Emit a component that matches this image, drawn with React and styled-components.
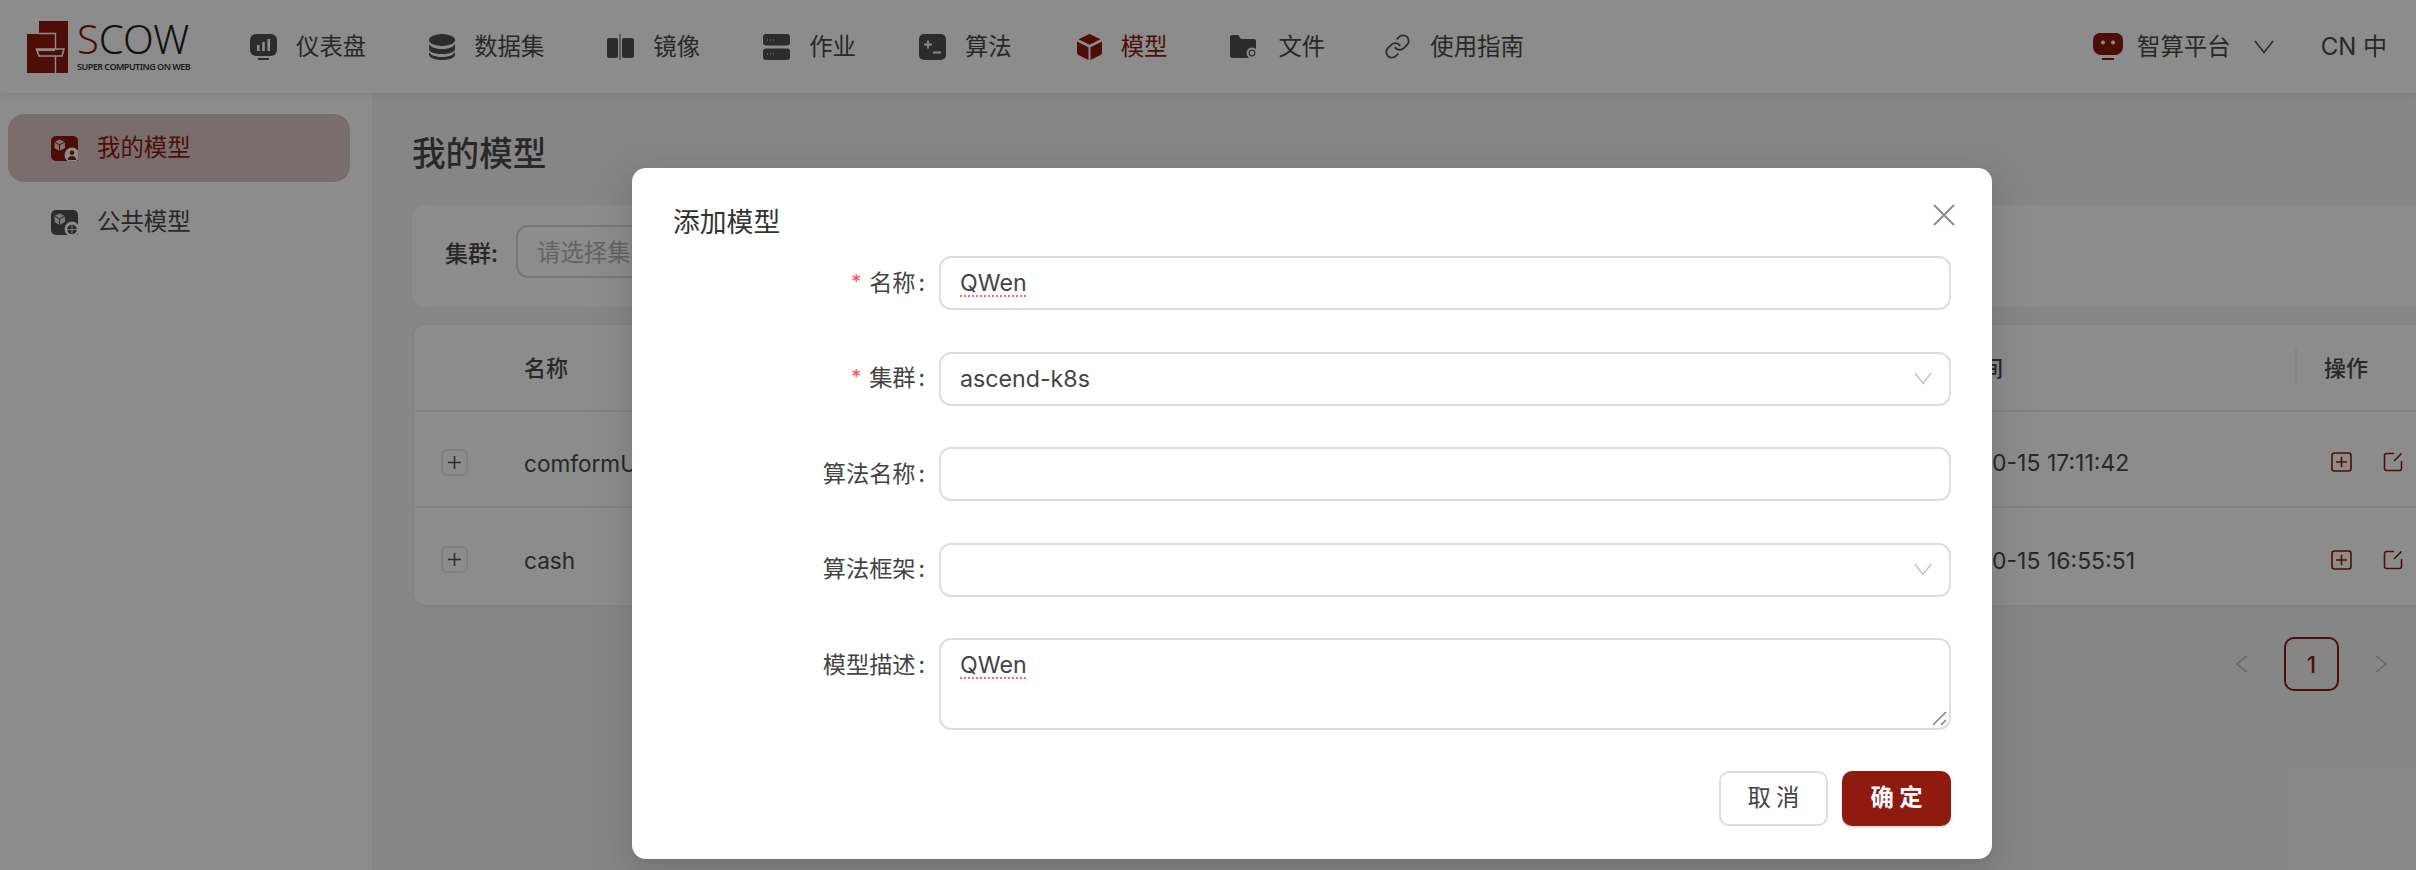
import React from "react";
import styled, { createGlobalStyle } from "styled-components";
import { Link as LinkIcon } from "lucide-react";

const Global = createGlobalStyle`
  html, body { margin: 0; padding: 0; height: 870px; overflow: hidden; background: #fff; }
  * { box-sizing: border-box; }
  body { font-family: Inter, "Noto Sans CJK SC", sans-serif; color: #4c4c4c; font-size: 22px; }
`;

const RED = "#8f1a10";
const TEXT = "#4a4a4a";
const Page = styled.div`width: 2416px; height: 870px; display: flex; flex-direction: column; overflow: hidden; position: relative;`;
const Header = styled.header`
  height: 93px; flex: none; background: #fff; display: flex; align-items: center; padding: 0 29px 0 27px;
  position: relative; z-index: 1; box-shadow: 0 2px 8px rgba(0,0,0,.08);
`;
const Logo = styled.div`display: flex; gap: 9px; align-items: flex-start; width: 223px; flex: none; height: 52px;`;
const LogoText = styled.div`display: flex; flex-direction: column; width: 114px;`;
const Wordmark = styled.div`
  font-family: "Noto Sans", sans-serif; font-weight: 300; font-size: 40px; line-height: 40px; height: 40px; color: #222; margin-top: -2px;
  span { color: ${RED}; }
`;
const Tagline = styled.div`font-family: "Noto Sans", sans-serif; font-weight: 600; font-size: 9px; letter-spacing: -.5px; line-height: 11px; color: #333; white-space: nowrap; margin-top: 2px;`;
const Nav = styled.nav`display: flex; gap: 63px; align-items: center; flex: 1;`;
const NavItem = styled.div`
  display: flex; align-items: center; gap: ${p => p.$gap || 19}px; margin-left: ${p => p.$shift || 0}px; font-size: 23.4px; line-height: 32px; font-family: "Noto Sans CJK SC", sans-serif;
  color: ${p => (p.$active ? RED : TEXT)};
  svg { flex: none; display: block; }
  span { padding-bottom: 4px; }
`;
const Right = styled.div`display: flex; align-items: center; font-family: "Noto Sans CJK SC", sans-serif; font-size: 23.4px; color: ${TEXT};`;
const Platform = styled.div`
  display: flex; align-items: center; gap: 14px;
  span { padding-bottom: 4px; }
`;
const HeadChevron = styled.div`margin-left: 9px; svg { display: block; }`;
const Lang = styled.div`margin-left: 47px; padding-bottom: 4px; font-family: Inter, "Noto Sans CJK SC", sans-serif; font-size: 24px; white-space: nowrap;`;
const Body = styled.div`flex: 1; display: flex; min-height: 0;`;
const Sidebar = styled.aside`width: 372px; flex: none; background: #fff; padding: 21px 22px 0 8px; display: flex; flex-direction: column; gap: 6px;`;
const SideItem = styled.div`
  height: 68px; border-radius: 16px; display: flex; align-items: center; gap: 19px; padding-left: 43px;
  font-family: "Noto Sans CJK SC", sans-serif; font-size: 23.4px;
  background: ${p => (p.$active ? "#dcc9c6" : "transparent")};
  color: ${p => (p.$active ? RED : TEXT)};
  span { padding-bottom: 4px; }
`;
const Main = styled.main`flex: 1; background: #f5f5f5; padding: 36px 0 0 40px; min-width: 0;`;
const Title = styled.h1`margin: 0 0 30px; font: 500 33.6px/46px "Noto Sans CJK SC", sans-serif; color: ${TEXT};`;
const FilterCard = styled.div`
  height: 102px; background: #fff; border-radius: 14px 0 0 14px; padding: 20px 33px 29px; display: flex; align-items: center; gap: 13px;
`;
const FilterLabel = styled.label`font: 500 23px/1 "Noto Sans CJK SC", sans-serif; color: ${TEXT}; width: 58px; white-space: nowrap; padding-top: 2px;`;
const FilterInput = styled.div`
  width: 400px; height: 53px; border: 2px solid #d9d9d9; border-radius: 12px; padding-left: 19px; display: flex; align-items: center;
  font: 400 23.4px/1 "Noto Sans CJK SC", sans-serif; color: #b5b5b5;
`;
const TableCard = styled.div`margin-top: 16px; background: #fff; border: 2px solid #f0f0f0; border-right: 0; border-radius: 14px 0 0 14px;`;
const Row = styled.div`
  display: grid; grid-template-columns: 110px 1391px 380px 120px; align-items: center;
  height: ${p => p.$h}px;
  padding: ${p => (p.$head ? "0 0 3px" : "6px 0 0")};
  border-bottom: ${p => (p.$last ? "0" : "2px solid #f0f0f0")};
`;
const Cell = styled.div`font-size: 22.6px; white-space: nowrap; color: ${TEXT}; padding-top: ${p => (p.$head ? 0 : 2)}px;`;
const TimeCell = styled(Cell)`font-size: 23px;`;
const HeadCell = styled(Cell)`font: 500 22px/1 "Noto Sans CJK SC", sans-serif;`;
const OpHead = styled(HeadCell)`
  position: relative; padding-left: 29px;
  &::before { content: ""; position: absolute; left: 0; top: -7px; bottom: -7px; width: 2px; background: #f0f0f0; }
`;
const Expand = styled.div`
  width: 27px; height: 27px; margin-left: 27px; border: 2px solid #ececec; border-radius: 6px; display: flex; align-items: center; justify-content: center;
`;
const Actions = styled.div`display: flex; gap: 31px; padding-left: 36px; svg { display: block; }`;
const Pager = styled.div`display: flex; justify-content: flex-end; align-items: center; padding: 30px 28px 0 0; gap: 34px;`;
const PageNum = styled.div`
  width: 55px; height: 54px; border: 2px solid ${RED}; border-radius: 10px; color: ${RED}; display: flex; align-items: center; justify-content: center;
  font-size: 22.6px; font-weight: 500; margin: 0 2px;
`;
const Overlay = styled.div`position: absolute; inset: 0; background: rgba(0,0,0,.45); z-index: 5;`;
const Modal = styled.div`
  position: absolute; z-index: 6; left: 632px; top: 168px; width: 1360px; height: 691px; background: #fff; border-radius: 14px;
  padding: 35px 41px 34px;
  box-shadow: 0 10px 26px rgba(0,0,0,.08), 0 5px 10px -6px rgba(0,0,0,.12), 0 14px 45px 13px rgba(0,0,0,.05);
`;
const ModalTitle = styled.div`font: 400 26.8px/36px "Noto Sans CJK SC", sans-serif; color: #333; margin-bottom: 17px;`;
const Close = styled.div`position: absolute; right: 37px; top: 36px; svg { display: block; }`;
const Form = styled.form`display: flex; flex-direction: column; gap: 41.5px;`;
const FormRow = styled.div`display: grid; grid-template-columns: 266px 1012px; align-items: start;`;
const Label = styled.label`
  display: flex; justify-content: flex-end; align-items: center; height: 54px; padding: 0 14px 3px 0;
  font: 400 23.2px/1 "Noto Sans CJK SC", sans-serif; color: #444;
`;
const Star = styled.span`color: #ff4d4f; margin-right: 8px; font-family: Inter, sans-serif; font-size: 20px;`;
const Colon = styled.span`margin-left: 3px;`;
const Field = styled.div`
  position: relative; height: ${p => p.$h || 54}px; border: 2px solid #dedede; border-radius: 12px; background: #fff;
  display: flex; align-items: ${p => (p.$top ? "flex-start" : "center")}; justify-content: space-between;
  padding: ${p => (p.$top ? "9px 17px 0 19px" : "0 17px 0 19px")};
  font-size: 23.2px; line-height: 32px; color: #444;
`;
const Spell = styled.span`text-decoration: underline dotted #f56c6c 2px; text-underline-offset: 4px;`;
const Grip = styled.svg`position: absolute; right: 1px; bottom: 1px;`;
const Footer = styled.div`display: flex; justify-content: flex-end; gap: 14px; margin-top: 41px;`;
const Btn = styled.button`
  width: 109px; height: 55px; border-radius: 10px; padding: 0 0 4px; font: ${p => (p.$primary ? 600 : 400)} 23.4px/1 "Noto Sans CJK SC", sans-serif; white-space: pre;
  background: ${p => (p.$primary ? RED : "#fff")};
  color: ${p => (p.$primary ? "#fff" : "#444")};
  border: ${p => (p.$primary ? "0" : "2px solid #dedede")};
  box-shadow: ${p => (p.$primary ? "0 2px 0 rgba(143,26,16,.14)" : "0 2px 0 rgba(0,0,0,.02)")};
`;

const INK = "#505050";
const Dash = () => (
  <svg width="27" height="26" viewBox="0 0 27 26"><path d="M6 0h15a6 6 0 0 1 6 6v10a6 6 0 0 1-6 6H6a6 6 0 0 1-6-6V6a6 6 0 0 1 6-6z" fill={INK}/><rect x="7" y="11" width="2.6" height="6" fill="#fff"/><rect x="12.2" y="8" width="2.6" height="9" fill="#fff"/><rect x="17.4" y="5" width="2.6" height="12" fill="#fff"/><rect x="8" y="24" width="11" height="2" fill={INK}/></svg>
);
const Db = () => (
  <svg width="26" height="26" viewBox="0 0 26 26"><ellipse cx="13" cy="6" rx="13" ry="6" fill={INK}/><path d="M0 10c2 3.6 7 5 13 5s11-1.400 13-5v5c0 3.300-5.800 5-13 5S0 18.300 0 15z" fill={INK}/><path d="M0 18c2 3.600 7 5 13 5s11-1.400 13-5v2.500C26 23.800 20.200 26 13 26S0 23.800 0 20.500z" fill={INK}/></svg>
);
const Img = () => (
  <svg width="27" height="26" viewBox="0 0 27 26"><rect x="0" y="4" width="11" height="20" rx="2" fill={INK}/><rect x="15" y="4" width="12" height="20" rx="2" fill={INK}/><rect x="12.500" y="0" width="1" height="26" fill={INK}/></svg>
);
const Job = () => (
  <svg width="27" height="26" viewBox="0 0 27 26"><rect width="27" height="11.500" rx="3" fill={INK}/><rect y="14.500" width="27" height="11.500" rx="3" fill={INK}/><path d="M4 6h1M7 6h1M10 6h1M4 20h1M7 20h1M10 20h1" stroke="#fff" strokeWidth="1"/></svg>
);
const Algo = () => (
  <svg width="27" height="26" viewBox="0 0 27 26"><rect width="27" height="26" rx="5" fill={INK}/><path d="M5 10.500h8M9 6.500v8M14 18.500h8" stroke="#fff" strokeWidth="1.800"/></svg>
);
const Cube = () => (
  <svg width="25" height="26" viewBox="0 0 25 26" fill={RED}><path d="M12.500 0l11 5.200-11 5.600-11-5.600z"/><path d="M0 7.400l11.500 5.800V26L2 21.200c-1.300-.7-2-1.700-2-3z"/><path d="M25 7.400l-11.500 5.800V26l9.500-4.800c1.300-.7 2-1.700 2-3z"/></svg>
);
const Folder = () => (
  <svg width="27" height="23" viewBox="0 0 27 23"><path d="M0 2a2 2 0 0 1 2-2h6l3 4h13a2 2 0 0 1 2 2v15a2 2 0 0 1-2 2H2a2 2 0 0 1-2-2z" fill={INK}/><circle cx="22" cy="18" r="5.500" fill="#fff"/><circle cx="22" cy="18" r="2.800" fill="none" stroke={INK} strokeWidth="1.200"/></svg>
);
const Robot = () => (
  <svg width="30" height="27" viewBox="0 0 30 27" fill={RED}><path d="M7 0h16a7 7 0 0 1 7 7v7a8 8 0 0 1-8 8H8a8 8 0 0 1-8-8V7a7 7 0 0 1 7-7z"/><circle cx="10" cy="9.500" r="2" fill="#fff"/><circle cx="20" cy="9.500" r="2" fill="#fff"/><rect x="9" y="25" width="12" height="2"/></svg>
);
const Chevron = ({ w = 20, h = 14, c = INK }) => (
  <svg width={w} height={h} viewBox="0 0 20 14"><path d="M1 1l9 11.500L19 1" fill="none" stroke={c} strokeWidth="1.600"/></svg>
);
const SideIcon = ({ color, kind }) => (
  <svg width="27" height="25" viewBox="0 0 27 25">
    <path d="M5 0h17a5 5 0 0 1 5 5v20H5a5 5 0 0 1-5-5V5a5 5 0 0 1 5-5z" fill={color}/>
    <path d="M8.500 3.500l5.500 2.600v6L8.500 15 3.500 12V6.100z" fill="#fff" opacity=".8"/>
    <path d="M3.500 6.100l5 2.600 5.500-2.600M8.500 8.700V15" stroke={color} strokeWidth="1" fill="none"/>
    <circle cx="21" cy="19" r="7.500" fill="#fff"/>
    {kind === "user"
      ? <path d="M21 14.500a2.300 2.300 0 1 1 0 4.600 2.300 2.300 0 0 1 0-4.600zM16.800 24c0-2.600 1.800-4 4.200-4s4.200 1.400 4.200 4z" fill={color}/>
      : <g fill={color}><circle cx="21" cy="19.500" r="4.800"/><path d="M16 19.500h10M21 14.700v9.600" stroke="#fff" strokeWidth=".8"/></g>}
  </svg>
);
const PlusBox = () => (
  <svg width="21" height="20" viewBox="0 0 21 20" fill="none" stroke={RED} strokeWidth="1.600"><rect x="1" y="1" width="19" height="18" rx="2.500"/><path d="M10.500 4.800v10.400M5 10h11"/></svg>
);
const EditBox = () => (
  <svg width="20" height="20" viewBox="0 0 20 20" fill="none" stroke={RED} strokeWidth="1.600"><path d="M11 1.500H3.500a2 2 0 0 0-2 2v13a2 2 0 0 0 2 2h13a2 2 0 0 0 2-2V9"/><path d="M18.500 1.500L11 9"/></svg>
);
const SmallPlus = () => (
  <svg width="15" height="15" viewBox="0 0 15 15" stroke={INK} strokeWidth="1.600"><path d="M7.500 1v13M1 7.500h13"/></svg>
);
const LogoMark = () => (
  <svg width="41" height="52" viewBox="0 0 41 52" style={{ flex: "none" }}>
    <rect x="12" y="0" width="29" height="52" fill={RED}/>
    <rect x="0" y="13" width="28" height="39" fill={RED}/>
    <path d="M12 12.500h16.500V52" fill="none" stroke="#fff" strokeWidth="1.400"/>
    <path d="M9.500 28h27.500l-2 7H12z" fill={RED} stroke="#fff" strokeWidth="1.600"/>
    <path d="M9 28h19v2H9z" fill="#fff"/>
  </svg>
);

const navItems = [
  { t: "仪表盘", icon: <Dash /> },
  { t: "数据集", icon: <Db /> },
  { t: "镜像", icon: <Img /> },
  { t: "作业", icon: <Job /> },
  { t: "算法", icon: <Algo /> },
  { t: "模型", icon: <Cube />, active: true, shift: 2 },
  { t: "文件", icon: <Folder />, gap: 21 },
  { t: "使用指南", icon: <LinkIcon size={27} strokeWidth={1.6} color={INK} />, shift: -4 },
];
const rows = [["comformUI", "2024-10-15 17:11:42"], ["cash", "2024-10-15 16:55:51"]];

export default function App() {
  return (
    <Page>
      <Global />
      <Header>
        <Logo>
          <LogoMark />
          <LogoText>
            <Wordmark><span>S</span>COW</Wordmark>
            <Tagline>SUPER COMPUTING ON WEB</Tagline>
          </LogoText>
        </Logo>
        <Nav>
          {navItems.map(({ t, icon, active, gap, shift }) => (
            <NavItem key={t} $active={active} $gap={gap} $shift={shift}>{icon}<span>{t}</span></NavItem>
          ))}
        </Nav>
        <Right>
          <Platform><Robot /><span>智算平台</span><HeadChevron><Chevron /></HeadChevron></Platform>
          <Lang>CN 中</Lang>
        </Right>
      </Header>
      <Body>
        <Sidebar>
          <SideItem $active><SideIcon color={RED} kind="user" /><span>我的模型</span></SideItem>
          <SideItem><SideIcon color={INK} kind="globe" /><span>公共模型</span></SideItem>
        </Sidebar>
        <Main>
          <Title>我的模型</Title>
          <FilterCard>
            <FilterLabel>集群:</FilterLabel>
            <FilterInput>请选择集群</FilterInput>
          </FilterCard>
          <TableCard>
            <Row $h={87} $head>
              <Cell $head />
              <HeadCell $head>名称</HeadCell>
              <HeadCell $head>创建时间</HeadCell>
              <OpHead $head>操作</OpHead>
            </Row>
            {rows.map(([n, t], i) => (
              <Row key={n} $h={i === 1 ? 97 : 96} $last={i === 1}>
                <Expand><SmallPlus /></Expand>
                <Cell>{n}</Cell>
                <TimeCell>{t}</TimeCell>
                <Actions><PlusBox /><EditBox /></Actions>
              </Row>
            ))}
          </TableCard>
          <Pager>
            <svg width="13" height="18" viewBox="0 0 13 18"><path d="M12 1L2 9l10 8" fill="none" stroke="#bdbdbd" strokeWidth="1.600"/></svg>
            <PageNum>1</PageNum>
            <svg width="13" height="18" viewBox="0 0 13 18"><path d="M1 1l10 8-10 8" fill="none" stroke="#bdbdbd" strokeWidth="1.600"/></svg>
          </Pager>
        </Main>
      </Body>
      <Overlay />
      <Modal>
        <ModalTitle>添加模型</ModalTitle>
        <Close>
          <svg width="22" height="22" viewBox="0 0 22 22"><path d="M1 1l20 20M21 1L1 21" stroke="#8c8c8c" strokeWidth="2"/></svg>
        </Close>
        <Form>
          <FormRow>
            <Label><Star>*</Star>名称<Colon>:</Colon></Label>
            <Field><Spell>QWen</Spell></Field>
          </FormRow>
          <FormRow>
            <Label><Star>*</Star>集群<Colon>:</Colon></Label>
            <Field>ascend-k8s<Chevron w={18} h={13} c="#bfbfbf" /></Field>
          </FormRow>
          <FormRow>
            <Label>算法名称<Colon>:</Colon></Label>
            <Field />
          </FormRow>
          <FormRow>
            <Label>算法框架<Colon>:</Colon></Label>
            <Field><span /><Chevron w={18} h={13} c="#bfbfbf" /></Field>
          </FormRow>
          <FormRow>
            <Label>模型描述<Colon>:</Colon></Label>
            <Field $h={92} $top>
              <Spell>QWen</Spell>
              <Grip width="16" height="16" viewBox="0 0 16 16"><path d="M1 14L14 1M9 14l5-5" stroke="#777" strokeWidth="1.400"/></Grip>
            </Field>
          </FormRow>
        </Form>
        <Footer>
          <Btn type="button">取 消</Btn>
          <Btn type="button" $primary>确 定</Btn>
        </Footer>
      </Modal>
    </Page>
  );
}
